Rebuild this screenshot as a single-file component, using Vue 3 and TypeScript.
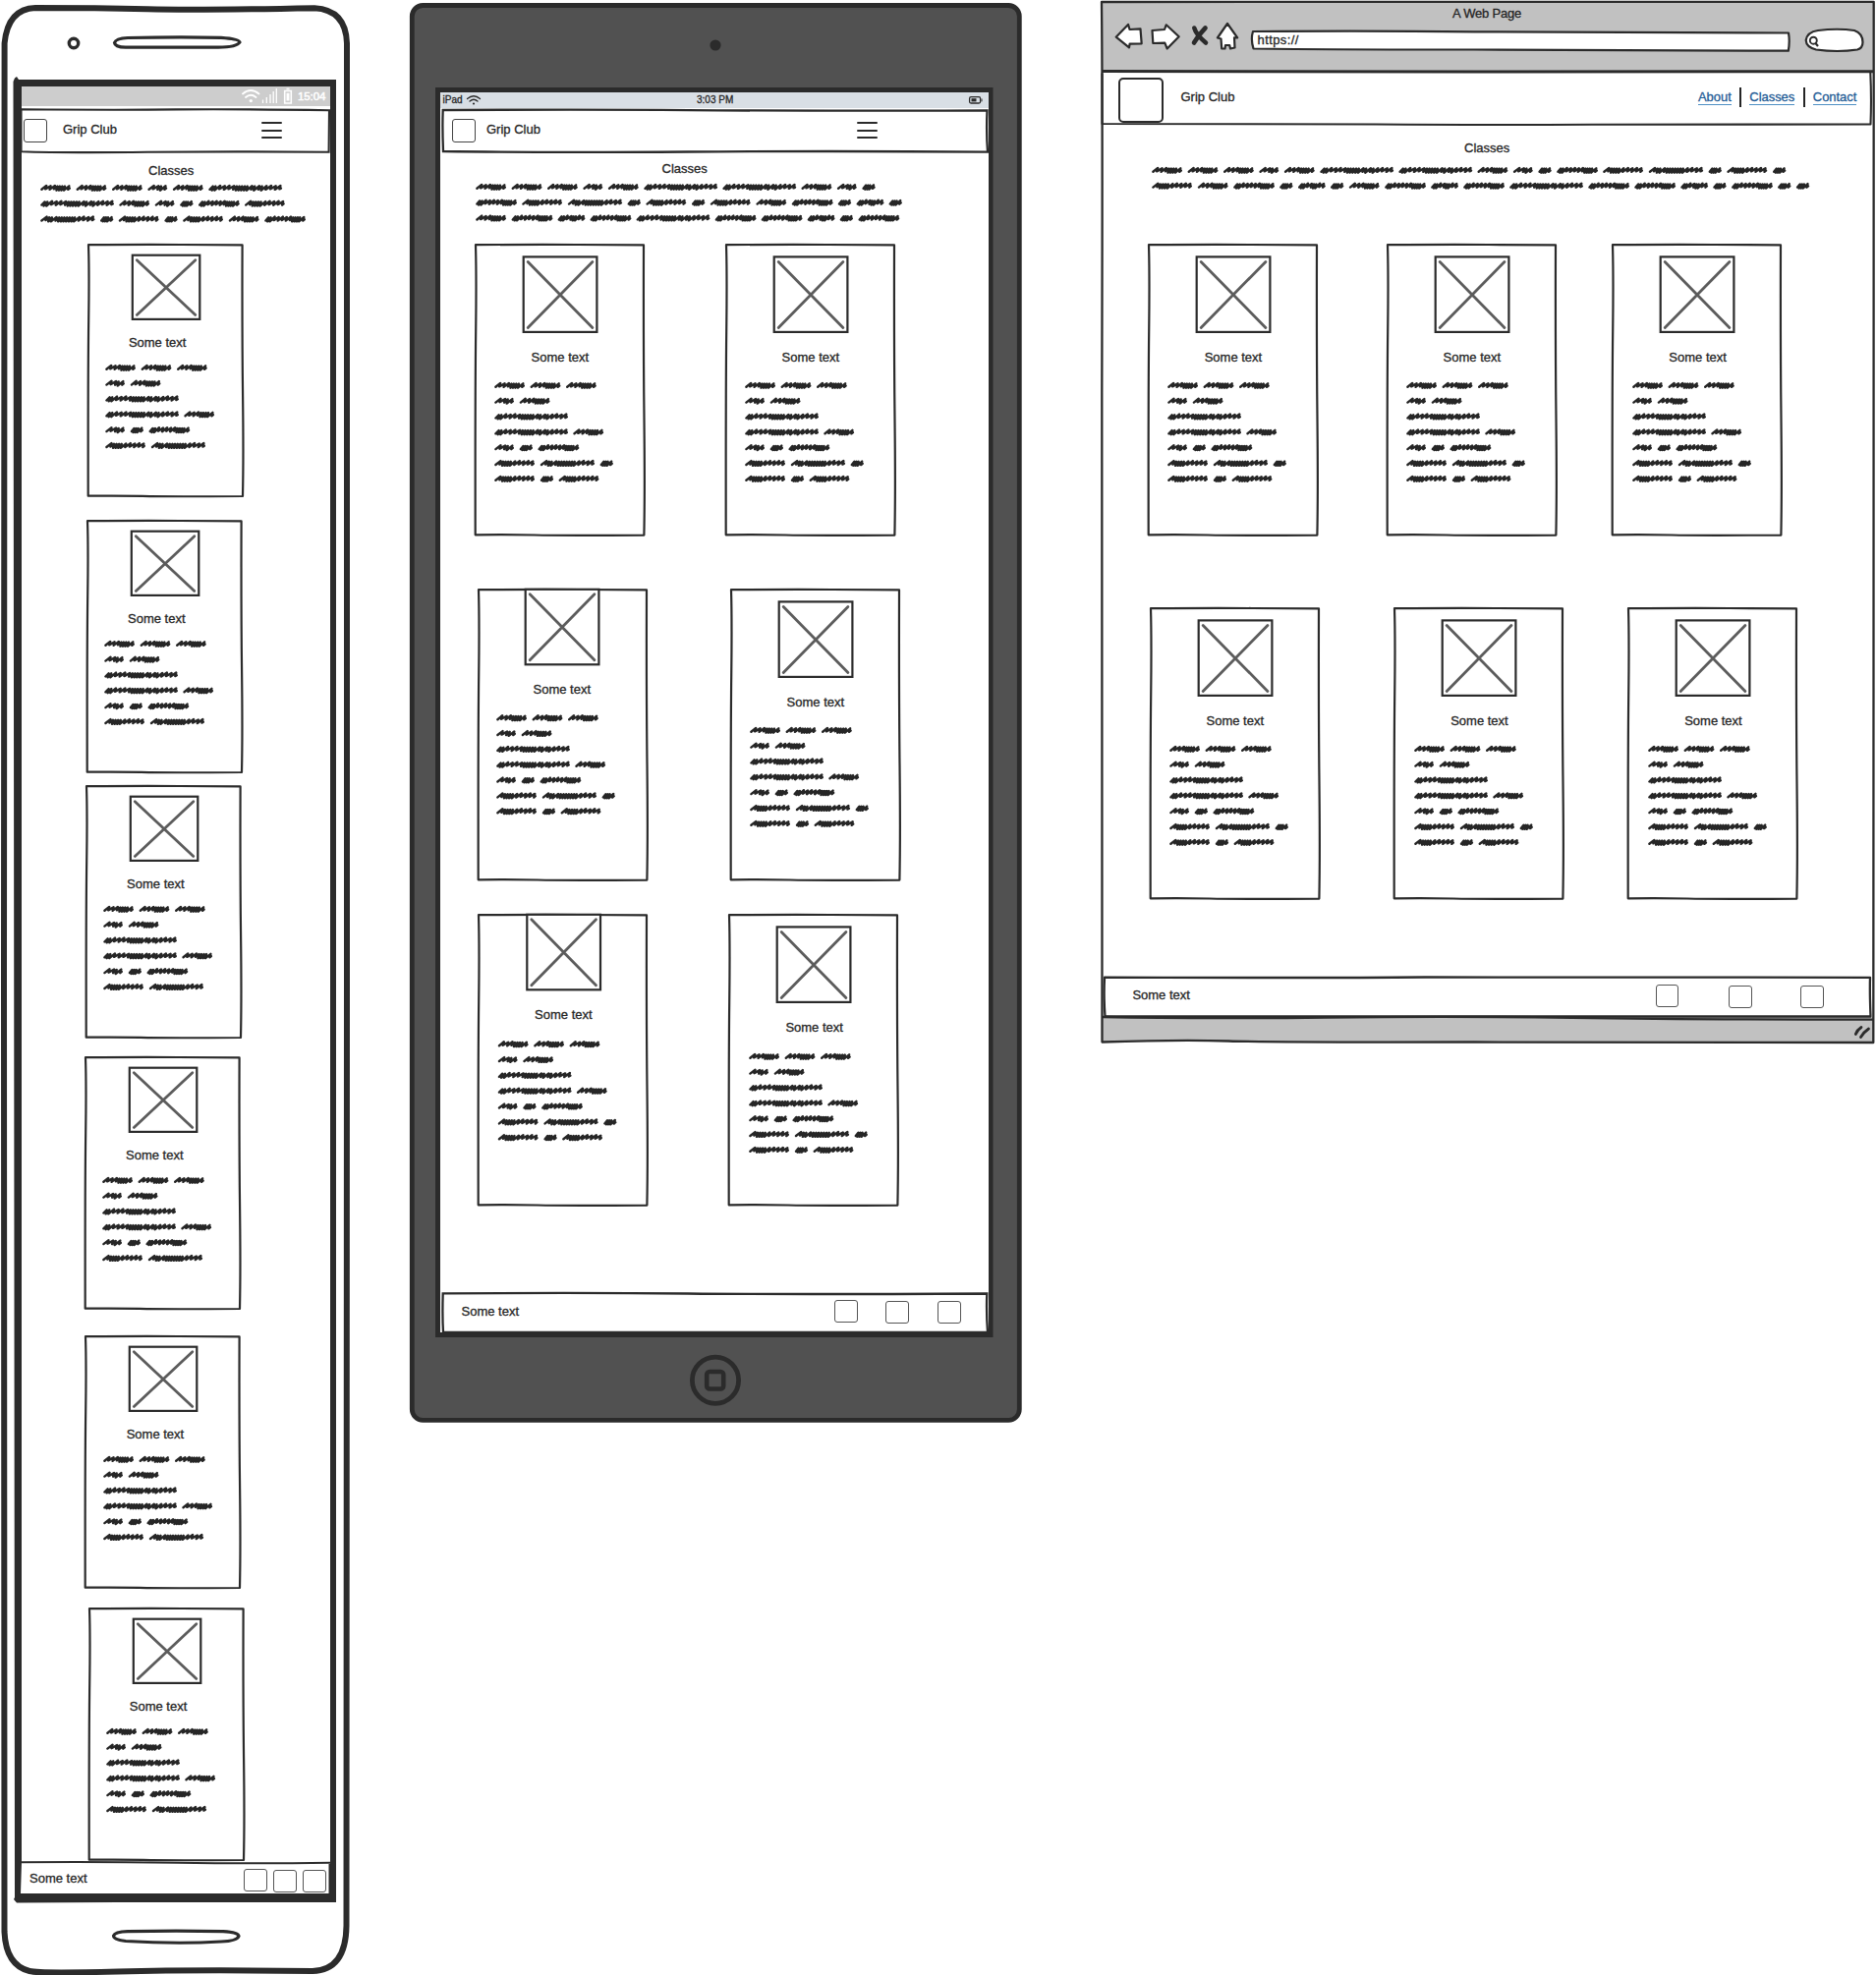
<script setup lang="ts">
interface Glyph { advance: number; width: number; strokes: string }
interface Tile { x: number; shiftX?: number; lift?: number }
interface Row { y: number; tiles: Tile[] }
interface CardSpec {
  w: number; h: number
  pic: { x: number; y: number; w: number; h: number }
  textX: number; textTop: number
  inkX: number; inkTop: number
  lines: string[]
}
interface Device {
  id: 'phone' | 'tablet' | 'desktop'
  originX: number
  card: CardSpec
  intro: string[]
  rows: Row[]
  footerY: number
}

// Scribbled words: "o" is a loose stroke, "d" is a dense one.
const glyphs: Record<string, Glyph> = {
  A: { advance: 36.4, width: 31, strokes: 'oooddddo' },
  B: { advance: 25.5, width: 20, strokes: 'oodo' },
  C: { advance: 80.1, width: 75, strokes: 'ddoooodddddododoooo' },
  D: { advance: 18.8, width: 13.5, strokes: 'dddo' },
  E: { advance: 47, width: 42, strokes: 'ddoooooddddo' },
  F: { advance: 46.6, width: 41, strokes: 'oddddooooo' },
  G: { advance: 60.8, width: 55.5, strokes: 'oddodddddddoooo' },
  H: { advance: 33, width: 28, strokes: 'ddooddoo' },
}

const PITCH = 15.83

function scribble(lines: string[]): string {
  let d = ''
  lines.forEach((line, row) => {
    const mid = 5.2 + row * PITCH
    let x = 0
    for (const ch of line) {
      const g = glyphs[ch]
      let net = 0
      for (const s of g.strokes) net += s === 'o' ? 4 : 2.3
      const k = (g.width - 3.6) / net
      let px = x + 1.4
      d += `M${px.toFixed(1)} ${(mid + 1.6).toFixed(1)}`
      let i = 0
      for (const s of g.strokes) {
        const step = (s === 'o' ? 4 : 2.3) * k
        const up = s === 'o' ? 2.3 - (i % 2) * 0.4 : 1.6
        const down = s === 'o' ? 1.2 + (i % 2) * 0.5 : 2.5
        d += `L${(px + step + 0.5).toFixed(1)} ${(mid - up).toFixed(1)}`
        px += step
        d += `L${(px - 0.5).toFixed(1)} ${(mid + down).toFixed(1)}`
        i++
      }
      d += `L${(px + 1).toFixed(1)} ${(mid + 0.4).toFixed(1)}`
      x += g.advance
    }
  })
  return d
}

function framePath(w: number, h: number): string {
  return `M0 0.2Q${w * 0.35} -0.3 ${w * 0.6} 0T${w - 0.4} 0.4Q${w - 0.7} ${h * 0.35} ${w + 0.1} ${h * 0.6}T${w} ${h}`
    + `Q${w * 0.5} ${h + 0.5} ${w * 0.35} ${h - 0.1}T-0.3 ${h - 0.3}Q-0.5 ${h * 0.5} 0.2 ${h * 0.3}T0 0.2Z`
}

const smallCard: CardSpec = {
  w: 157, h: 256,
  pic: { x: 44.8, y: 10.7, w: 68.5, h: 65.2 },
  textX: 41.3, textTop: 92.4,
  inkX: 17.7, inkTop: 119.9,
  lines: ['AAA', 'BA', 'C', 'CA', 'BDE', 'FG'],
}
const largeCard: CardSpec = {
  w: 171.4, h: 295.6,
  pic: { x: 48.7, y: 12.4, w: 74.7, h: 76.5 },
  textX: 57, textTop: 107.3,
  inkX: 19.8, inkTop: 138.4,
  lines: ['AAA', 'BA', 'C', 'CA', 'BDE', 'FGD', 'FDF'],
}

const devices: Device[] = [
  {
    id: 'phone', originX: 0, card: smallCard,
    intro: ['AAABAC', 'CABDEF', 'GDFDFAE'],
    rows: [
      { y: 248.7, tiles: [{ x: 89.6 }] },
      { y: 529.7, tiles: [{ x: 88.7 }] },
      { y: 800, tiles: [{ x: 87.8 }] },
      { y: 1075.8, tiles: [{ x: 86.7 }] },
      { y: 1359.9, tiles: [{ x: 87.4 }] },
      { y: 1636.7, tiles: [{ x: 90.5 }] },
    ],
    footerY: 1895,
  },
  {
    id: 'tablet', originX: 410, card: largeCard,
    intro: ['AAABACCABD', 'EFGDFDFAEDHD', 'AEHECEEHDE'],
    rows: [
      { y: 248.7, tiles: [{ x: 483.6 }, { x: 738.6 }] },
      { y: 599.8, tiles: [{ x: 486.5, shiftX: -1, lift: 12.6 }, { x: 743.6 }] },
      { y: 931.2, tiles: [{ x: 486.5, shiftX: 0.6, lift: 12.6 }, { x: 742.4 }] },
    ],
    footerY: 1316,
  },
  {
    id: 'desktop', originX: 1110, card: largeCard,
    intro: ['AAABACCABDEFGDFD', 'FAEDHDAEHECEEHDEDD'],
    rows: [
      { y: 248.7, tiles: [{ x: 1168.7 }, { x: 1411.6 }, { x: 1641.4 }] },
      { y: 619, tiles: [{ x: 1170.5 }, { x: 1419.2 }, { x: 1657.2 }] },
    ],
    footerY: 995,
  },
]

const CARDS_TOP = 240

function rowGap(device: Device, i: number): number {
  const above = i === 0 ? CARDS_TOP : device.rows[i - 1].y + device.card.h
  return device.rows[i].y - above
}
function tileGap(device: Device, row: Row, i: number): number {
  const left = i === 0 ? device.originX : row.tiles[i - 1].x + device.card.w
  return row.tiles[i].x - left
}
function footerGap(device: Device): number {
  return device.footerY - device.rows[device.rows.length - 1].y - device.card.h
}
</script>

<template>
  <main class="board">
    <section v-for="d in devices" :key="d.id" class="device" :class="d.id">
      <!-- phone shell -->
      <svg v-if="d.id === 'phone'" class="chrome" width="410" height="2010" viewBox="0 0 410 2010" fill="none" stroke="#2b2b2b">
        <path d="M36 8Q100 8 150 9.3T320 8.2Q352 10 353 44Q351.800 500 353 1000T352.500 1960Q352 2005 318 2006Q200 2004.500 120 2006.500T30 2006Q6 2000 4.500 1966Q5 1400 4 1000T4.600 44Q8 9 36 8Z" stroke-width="6" />
        <circle cx="75" cy="44" r="4.700" stroke-width="3.400" />
        <path d="M130 38.500Q180 37.500 225 38.300Q243.500 39.500 244 43Q241 48 222 48.200H128Q117 48 116.500 43.500Q118 39 130 38.500Z" stroke-width="3.200" />
        <path d="M130 1965.700Q180 1964.700 227 1965.700Q242.500 1966.500 243 1970.500Q241 1975.500 225 1976Q180 1978.700 128 1975.500Q115.500 1974 115.500 1970Q117 1966 130 1965.700Z" stroke-width="3.200" />
        <rect x="22" y="88" width="314" height="20" fill="#cdcdcd" stroke="none" />
        <path d="M13.500 83L15 79.500L17 78L19 81H342V1936H120L17 1936.500L14 1933L15 1931ZM22 88V1895L21 1927H335L336 1895V88Z" fill="#2b2b2b" stroke="none" fill-rule="evenodd" />
        <path d="M21.500 111.300Q120 112 180 111.400T335 112.300L334.600 154.800Q240 154 150 154.800T21.500 154.200Z" stroke-width="2.100" />
        <path d="M22 1895.300Q100 1894.700 180 1895.800T336 1895.800" stroke-width="2" />
        <path d="M335.300 1897V1927" stroke-width="1.600" />
        <g stroke="#fff">
          <path d="M247 95.500Q255 88.500 263.500 95.500M250 99Q255 94.500 260.500 99" stroke-width="1.800" stroke-linecap="round" />
          <circle cx="255.300" cy="102.600" r="1.700" fill="#fff" stroke="none" />
          <path d="M267.500 101.500V105M271.300 99V105M275 96V105M278.200 93V105M281.300 90V105" stroke-width="1.300" />
          <path d="M289.700 92.500H296.300V105H289.700ZM291.500 90.500H294.500" stroke-width="1.600" />
          <path d="M293 94.700V102.500" stroke-width="3" />
        </g>
      </svg>

      <!-- tablet shell -->
      <svg v-else-if="d.id === 'tablet'" class="chrome" width="700" height="1460" viewBox="410 0 700 1460" fill="none" stroke="#2b2b2b">
        <rect x="419.300" y="5.500" width="618" height="1439.800" rx="11" fill="#515151" stroke-width="4.800" />
        <circle cx="728" cy="46" r="5.600" fill="#2b2b2b" stroke="none" />
        <rect x="443" y="89" width="567.500" height="1272" fill="#2b2b2b" stroke="none" />
        <rect x="448" y="94" width="558" height="1262" fill="#fff" stroke="none" />
        <rect x="448" y="94" width="558" height="16" fill="#d9dfe5" stroke="none" />
        <path d="M450.700 112Q600 111.200 700 112.100T1004.500 112.300Q1003.500 135 1005 154.600Q850 153.500 700 154.500T451 154Q450 130 450.700 112Z" stroke-width="2.300" fill="#fff" />
        <path d="M450.700 1316.300Q600 1315.500 700 1316.500T1004.300 1316.500Q1003.500 1335 1005 1356H451Q450 1340 450.700 1316.300Z" stroke-width="2.300" fill="#fff" />
        <path d="M475.500 100.500Q482 95 488.500 100.500M478 103Q482 99.500 486 103" stroke-width="1.300" stroke-linecap="round" />
        <circle cx="482" cy="105.500" r="1.100" fill="#2b2b2b" stroke="none" />
        <rect x="986.600" y="98.700" width="11" height="6.300" rx="1.500" stroke-width="1.300" />
        <path d="M988.500 101.800H993.500" stroke-width="3.200" />
        <path d="M999 100.500V103.300" stroke-width="1" />
        <circle cx="728" cy="1404.700" r="23.600" stroke-width="4.800" />
        <rect x="719.200" y="1396" width="17" height="17.500" rx="3" stroke-width="4.600" />
      </svg>

      <!-- browser window -->
      <svg v-else class="chrome" width="799" height="1070" viewBox="1110 0 799 1070" fill="none" stroke="#2b2b2b" stroke-linejoin="round">
        <path d="M1121 2H1907V73H1121ZM1122 1035H1906V1060H1122Z" fill="#c1c1c1" stroke="none" />
        <path d="M1121 2L1906.700 1.800Q1906 400 1906.500 700T1906.300 1061Q1700 1060 1500 1060.500T1250 1059.500T1121.500 1060.500Q1120.500 700 1121.300 400T1121 2Z" stroke-width="2.300" />
        <path d="M1121 72.600Q1300 72.200 1500 73T1906 72.800" stroke-width="3" />
        <path d="M1121.500 74.500V126Q1300 125.700 1400 126.500T1620 126.800T1903.500 126.500Q1904.500 100 1903.300 74" stroke-width="2.100" />
        <path d="M1124 994.700Q1350 995.400 1450 994.500T1903 994.800Q1902.500 1010 1903.500 1034.500H1124.500Q1123 1015 1124 994.700Z" stroke-width="2.300" fill="#fff" />
        <path d="M1122 1035Q1220 1037 1350 1035.500T1600 1035.800T1906 1037.600" stroke-width="2.300" />
        <g fill="#fff" stroke-width="2.200">
          <path d="M1135.700 37.700L1148 24.900L1149.500 30L1160.500 29.300L1161.700 44.300L1149.600 44.700L1149 48.300Z" />
          <path d="M1172.500 31L1185 30L1186.700 25.300L1199.700 37.300L1187.700 49.500L1185.300 43.700L1173.300 44Z" />
          <path d="M1249 24L1259.200 38.300H1256L1256.500 48.500L1252 49.500L1251.200 46H1247L1246.500 49.500L1243.200 49.300L1242.500 39.500L1238.900 38.500Z" />
          <path d="M1275 32Q1400 31.300 1500 32.300T1820 33.500Q1821.500 42 1819.800 51.700Q1650 50.500 1500 50.500T1275.500 49.500Q1272.500 40 1275 32Z" />
          <path d="M1850 31Q1870 28.500 1887 31Q1895.500 34 1895.500 43Q1895.500 49 1890 50.500Q1870 53.500 1848 50.500Q1838 48 1837.700 41Q1839 32.500 1850 31Z" />
        </g>
        <path d="M1215.300 28.500Q1217 35 1227 43.500M1226.500 28.500Q1220 35 1215 43.500" stroke-width="4.600" stroke-linecap="round" />
        <circle cx="1845.300" cy="41.200" r="3.500" stroke-width="1.900" />
        <path d="M1847 43.500L1850 47" stroke-width="2.200" />
        <path d="M1888.300 1052.500Q1890 1048 1894 1045.500M1893.500 1055.500Q1897 1050 1901.500 1047" stroke-width="2.800" stroke-linecap="round" />
      </svg>

      <div class="screen">
        <p v-if="d.id === 'phone'" class="status phone-clock">15:04</p>
        <div v-else-if="d.id === 'tablet'" class="status tablet-status">
          <span>iPad</span><span>3:03 PM</span>
        </div>
        <div v-else class="browser-bar">
          <p class="window-title">A Web Page</p>
          <p class="address">https://</p>
        </div>

        <header class="header">
          <span class="logo"></span>
          <span class="brand">Grip Club</span>
          <nav v-if="d.id === 'desktop'" class="links">
            <a>About</a><i></i><a>Classes</a><i></i><a>Contact</a>
          </nav>
          <span v-else class="burger"><i></i><i></i><i></i></span>
        </header>

        <div class="intro">
          <h1>Classes</h1>
          <svg class="ink" width="10" height="48"><path :d="scribble(d.intro)" /></svg>
        </div>

        <div v-for="(row, r) in d.rows" :key="r" class="row" :style="{ marginTop: rowGap(d, r) + 'px' }">
          <article
            v-for="(tile, t) in row.tiles" :key="t" class="card"
            :style="{ width: d.card.w + 'px', height: d.card.h + 'px', marginLeft: tileGap(d, row, t) + 'px' }"
          >
            <svg class="frame" :width="d.card.w" :height="d.card.h">
              <path :d="framePath(d.card.w, d.card.h)" />
              <g :transform="`translate(${d.card.pic.x + (tile.shiftX ?? 0)} ${d.card.pic.y - (tile.lift ?? 0)})`">
                <rect :width="d.card.pic.w" :height="d.card.pic.h" />
                <path
                  class="cross"
                  :d="`M4.500 5L${d.card.pic.w - 4.5} ${d.card.pic.h - 4.5}M${d.card.pic.w - 4.5} 5L4.500 ${d.card.pic.h - 4.5}`"
                />
              </g>
            </svg>
            <div class="body" :style="{ transform: `translate(${tile.shiftX ?? 0}px, ${-(tile.lift ?? 0)}px)` }">
              <p :style="{ paddingLeft: d.card.textX + 'px', paddingTop: d.card.textTop + 'px', height: d.card.inkTop + 'px' }">Some text</p>
              <svg class="ink" width="10" height="10" :style="{ marginLeft: d.card.inkX + 'px' }">
                <path :d="scribble(d.card.lines)" />
              </svg>
            </div>
          </article>
        </div>

        <footer class="footer" :style="{ marginTop: footerGap(d) + 'px' }">
          <span>Some text</span>
          <i></i><i></i><i></i>
        </footer>
      </div>
    </section>
  </main>
</template>

<style>
body {
  margin: 0;
  background: #fff;
}
</style>

<style scoped>
.board {
  display: flex;
  align-items: flex-start;
  width: 1909px;
  height: 2010px;
  overflow: hidden;
  background: #fff;
  color: #252525;
  font: 13px/16px "Liberation Sans", Arial, sans-serif;
  -webkit-text-stroke: 0.3px currentColor;
}
.board * {
  box-sizing: border-box;
}
p, h1 {
  margin: 0;
  font: inherit;
  white-space: nowrap;
}
.device {
  display: grid;
  flex: none;
}
.phone { width: 410px; }
.tablet { width: 700px; }
.desktop { width: 799px; }
.device > * {
  grid-area: 1 / 1;
}
svg {
  display: block;
  overflow: visible;
}
.screen {
  display: flex;
  flex-direction: column;
}

/* status bars */
.status { flex: none; white-space: nowrap; }
.phone-clock {
  height: 108px;
  padding: 90px 0 0 303px;
  color: #fff;
  font-size: 11.5px;
  letter-spacing: -0.1px;
  -webkit-text-stroke-width: 0.5px;
}
.tablet-status {
  display: flex;
  height: 110px;
  padding: 94px 0 0 40.5px;
  font-size: 10px;
}
.tablet-status span:first-child { width: 258.500px; }
.browser-bar { height: 73px; flex: none; }
.window-title {
  padding: 6px 0 0 368px;
  height: 33px;
  letter-spacing: -0.2px;
}
.address {
  padding-left: 169.500px;
  letter-spacing: 0.4px;
}

/* header */
.header {
  display: flex;
  flex: none;
  align-items: flex-start;
}
.phone .header { height: 46px; padding: 13px 0 0 24px; }
.tablet .header { height: 44px; padding: 11px 0 0 50px; }
.desktop .header { height: 54px; padding: 6px 0 0 28px; }
.logo {
  width: 24px;
  height: 24px;
  border: 1.4px solid #444;
  border-radius: 3px;
}
.desktop .logo {
  width: 46px;
  height: 46px;
  border: 2px solid #2b2b2b;
  border-radius: 5px;
}
.brand { width: 100px; margin: 3px 0 0 16px; }
.tablet .brand { margin-left: 11px; }
.desktop .brand { margin: 12px 0 0 17.500px; }
.burger {
  display: flex;
  flex-direction: column;
  gap: 5.500px;
  width: 21px;
  margin: 3px 0 0 102px;
}
.tablet .burger { margin-left: 276.500px; }
.burger i {
  height: 2px;
  border-radius: 1px;
  background: #2b2b2b;
}
.links {
  display: flex;
  margin: 12px 0 0 426.500px;
}
.links a {
  height: 15.500px;
  border-bottom: 1px solid #4d8fc4;
  color: #1f5c96;
  letter-spacing: -0.05px;
}
.links i {
  width: 2px;
  height: 20px;
  margin: -2px 8.300px 0 8.300px;
  background: #252525;
}

/* intro copy */
.intro { flex: none; }
.phone .intro { height: 86px; padding: 12px 0 0 41px; }
.tablet .intro { height: 86px; padding: 10px 0 0 74px; }
.desktop .intro { height: 113px; padding: 16px 0 0 61.500px; }
.phone h1 { padding-left: 110px; height: 20px; }
.tablet h1 { padding-left: 189.500px; height: 20.500px; }
.desktop h1 { padding-left: 318.500px; height: 25px; }
.ink path {
  fill: none;
  stroke: #262626;
  stroke-width: 2.400;
  stroke-linecap: round;
  stroke-linejoin: round;
}

/* cards */
.row { display: flex; flex: none; }
.card { display: grid; flex: none; }
.card > * { grid-area: 1 / 1; }
.frame path, .frame rect {
  fill: none;
  stroke: #2b2b2b;
  stroke-width: 2.200;
  stroke-linejoin: round;
}
.frame rect { fill: #fff; stroke-linejoin: miter; }
.frame .cross {
  stroke: #5c5c5c;
  stroke-width: 2.800;
  stroke-linecap: round;
}

/* footer */
.footer {
  display: flex;
  flex: none;
  align-items: flex-start;
}
.footer span { width: 80px; }
.footer i {
  width: 23.500px;
  height: 23.500px;
  border: 1.200px solid #555;
  border-radius: 3px;
}
.phone .footer { padding: 8px 0 0 30px; }
.phone .footer span { margin-top: 1px; }
.phone .footer i:nth-of-type(1) { margin: -1px 0 0 138.300px; }
.phone .footer i:nth-of-type(n + 2) { margin-left: 6.500px; }
.tablet .footer { padding: 8px 0 0 59.500px; }
.tablet .footer span { margin-top: 3px; }
.tablet .footer i:nth-of-type(1) { margin: -1px 0 0 299.500px; }
.tablet .footer i:nth-of-type(2) { margin-left: 28.500px; }
.tablet .footer i:nth-of-type(3) { margin-left: 29.500px; }
.desktop .footer { padding: 8px 0 0 42.400px; }
.desktop .footer span { margin-top: 2.500px; }
.desktop .footer i:nth-of-type(1) { margin: -1px 0 0 452.500px; }
.desktop .footer i:nth-of-type(2) { margin-left: 51px; }
.desktop .footer i:nth-of-type(3) { margin-left: 49.500px; }
</style>
